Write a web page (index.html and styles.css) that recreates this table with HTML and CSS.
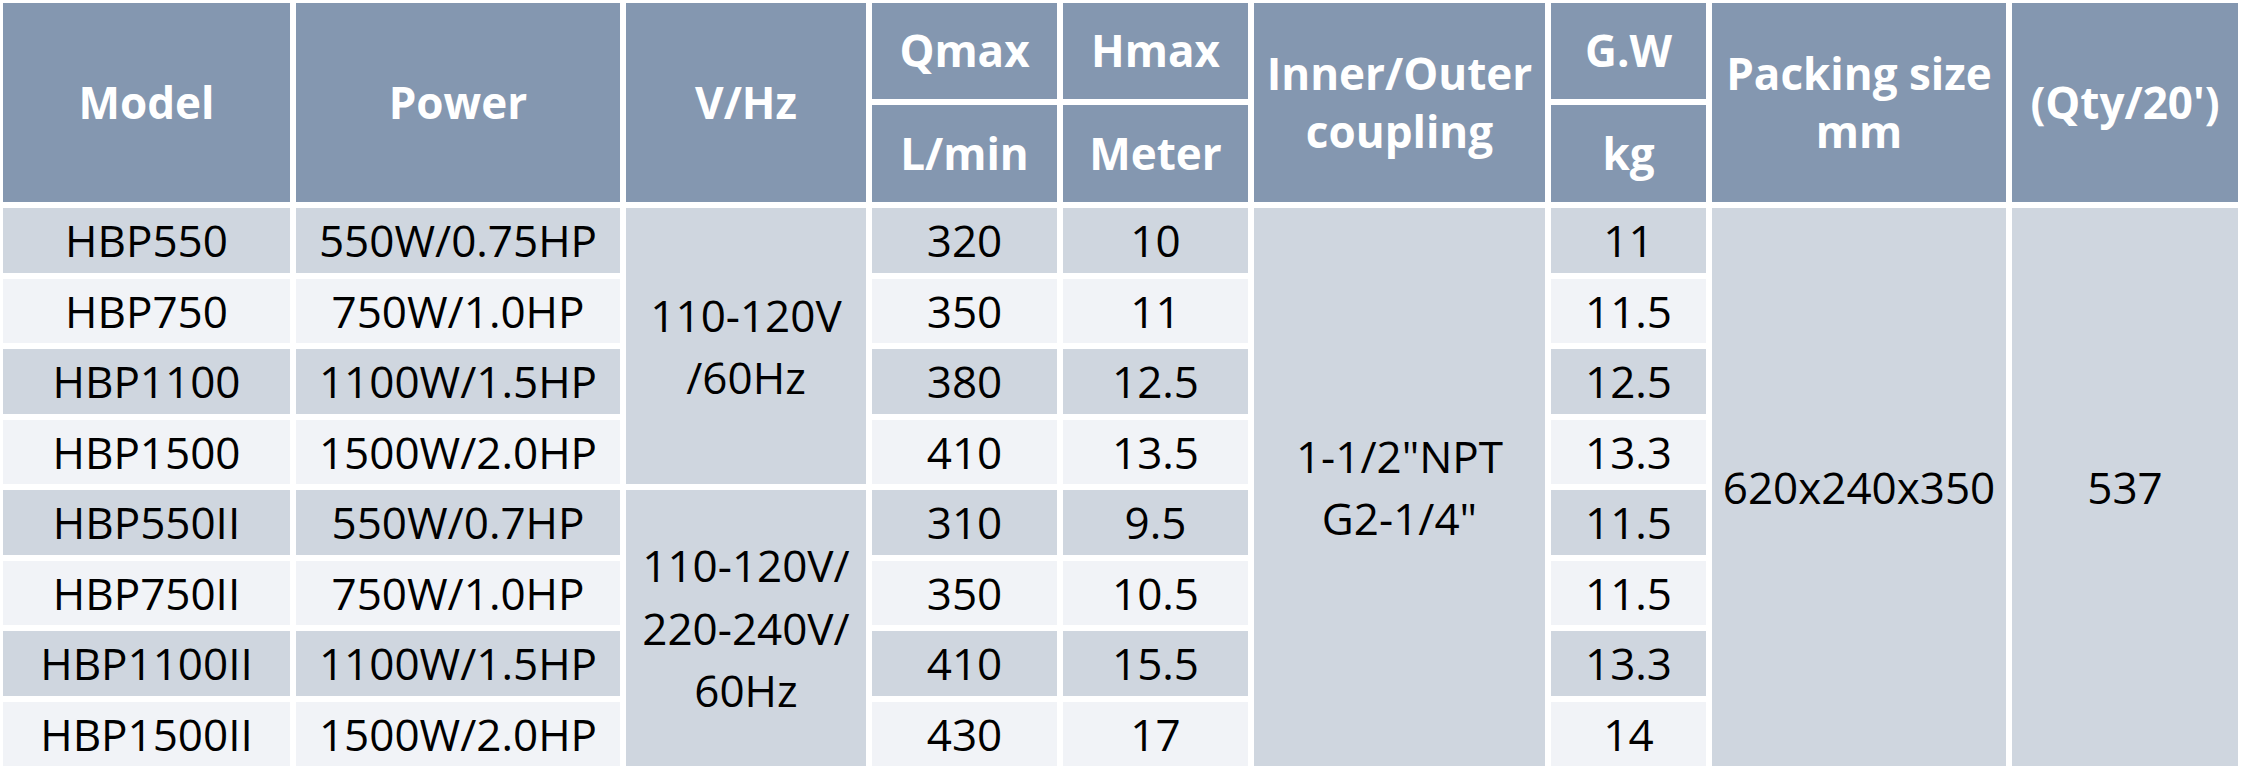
FILE: index.html
```html
<!DOCTYPE html>
<html lang="en">

<head>
    <meta charset="UTF-8">
    <meta name="viewport" content="width=device-width, initial-scale=1.0">
    <title>HBP Pump Specifications</title>
    <link rel="stylesheet" href="styles.css">
</head>

<body>

    <table class="spec-table">
        <colgroup>
            <col class="col-model">
            <col class="col-power">
            <col class="col-volt">
            <col class="col-qmax">
            <col class="col-hmax">
            <col class="col-coupling">
            <col class="col-gw">
            <col class="col-packing">
            <col class="col-qty">
        </colgroup>
        <thead>
            <tr class="head-top">
                <th rowspan="2">Model</th>
                <th rowspan="2">Power</th>
                <th rowspan="2">V/Hz</th>
                <th>Qmax</th>
                <th>Hmax</th>
                <th rowspan="2">Inner/Outer<br>coupling</th>
                <th>G.W</th>
                <th rowspan="2">Packing size<br>mm</th>
                <th rowspan="2">(Qty/20')</th>
            </tr>
            <tr class="head-bottom">
                <th>L/min</th>
                <th>Meter</th>
                <th>kg</th>
            </tr>
        </thead>
        <tbody>
            <tr class="dark">
                <td>HBP550</td>
                <td>550W/0.75HP</td>
                <td rowspan="4" class="merged">110-120V<br>/60Hz</td>
                <td>320</td>
                <td>10</td>
                <td rowspan="8" class="merged">1-1/2"NPT<br>G2-1/4"</td>
                <td>11</td>
                <td rowspan="8" class="merged">620x240x350</td>
                <td rowspan="8" class="merged">537</td>
            </tr>
            <tr class="light">
                <td>HBP750</td>
                <td>750W/1.0HP</td>
                <td>350</td>
                <td>11</td>
                <td>11.5</td>
            </tr>
            <tr class="dark">
                <td>HBP1100</td>
                <td>1100W/1.5HP</td>
                <td>380</td>
                <td>12.5</td>
                <td>12.5</td>
            </tr>
            <tr class="light">
                <td>HBP1500</td>
                <td>1500W/2.0HP</td>
                <td>410</td>
                <td>13.5</td>
                <td>13.3</td>
            </tr>
            <tr class="dark">
                <td>HBP550II</td>
                <td>550W/0.7HP</td>
                <td rowspan="4" class="merged">110-120V/<br>220-240V/<br>60Hz</td>
                <td>310</td>
                <td>9.5</td>
                <td>11.5</td>
            </tr>
            <tr class="light">
                <td>HBP750II</td>
                <td>750W/1.0HP</td>
                <td>350</td>
                <td>10.5</td>
                <td>11.5</td>
            </tr>
            <tr class="dark">
                <td>HBP1100II</td>
                <td>1100W/1.5HP</td>
                <td>410</td>
                <td>15.5</td>
                <td>13.3</td>
            </tr>
            <tr class="light">
                <td>HBP1500II</td>
                <td>1500W/2.0HP</td>
                <td>430</td>
                <td>17</td>
                <td>14</td>
            </tr>
        </tbody>
    </table>

</body>
</html>
```

FILE: styles.css
```css
body {
    margin: 0;
    background-color: #ffffff;
    font-family: "Open Sans", "Noto Sans", sans-serif;
}

.spec-table {
    table-layout: fixed;
    width: 2241px;
    border-collapse: separate;
    border-spacing: 0;
}

.col-model { width: 293px; }
.col-power { width: 330px; }
.col-volt { width: 246px; }
.col-qmax { width: 191px; }
.col-hmax { width: 191px; }
.col-coupling { width: 297px; }
.col-gw { width: 161px; }
.col-packing { width: 300px; }
.col-qty { width: 232px; }

th,
td {
    box-sizing: border-box;
    border: 3px solid #ffffff;
    padding: 0;
    text-align: center;
    vertical-align: middle;
    white-space: nowrap;
}

th {
    background-color: #8497b0;
    color: #ffffff;
    font-size: 44px;
    font-weight: 700;
    line-height: 1.3;
}

td {
    color: #000000;
    font-size: 44px;
    line-height: 1.42;
}

.head-top {
    height: 102px;
}

.head-bottom {
    height: 103px;
}

tbody tr {
    height: 70.5px;
}

.dark td {
    background-color: #cfd6df;
}

.light td {
    background-color: #f1f3f7;
}

td.merged {
    background-color: #cfd6df;
}
```
